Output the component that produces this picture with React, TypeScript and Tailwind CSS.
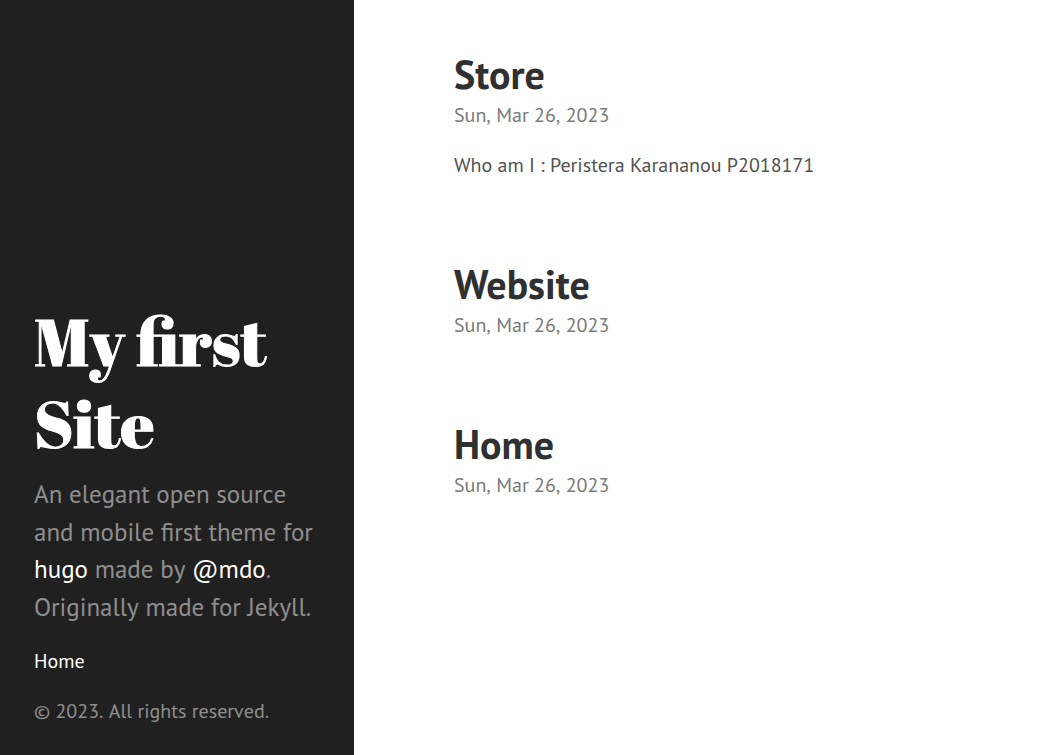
const posts = [
  { title: "Store", date: "Sun, Mar 26, 2023", body: "Who am I : Peristera Karananou P2018171" },
  { title: "Website", date: "Sun, Mar 26, 2023" },
  { title: "Home", date: "Sun, Mar 26, 2023" },
];

export default function App() {
  return (
    <div className="flex min-h-screen bg-white font-['PT_Sans','Open_Sans','Noto_Sans',sans-serif] text-[20px] leading-normal text-[#515151]">
      <aside className="sticky top-0 flex h-screen w-[354px] shrink-0 flex-col justify-end bg-[#202020] px-[34px] pb-[29px] text-white/50 [font-kerning:none]">
        <h1 className="mb-3 font-['Abril_Fatface','Liberation_Serif',serif] text-[66px] leading-[82px] font-normal text-white [-webkit-text-stroke:1px_white]">
          <a href="#">My first Site</a>
        </h1>
        <p className="mb-5 text-[25px]">
          An elegant open source and mobile first theme for{" "}
          <a className="text-white" href="#hugo">hugo</a> made by <a className="text-white" href="#mdo">@mdo</a>. Originally made for Jekyll.
        </p>
        <nav className="mb-5">
          <a className="text-white" href="#home">Home</a>
        </nav>
        <p>© 2023. All rights reserved.</p>
      </aside>
      <main className="min-w-0 flex-1 pt-[49px] pr-10 pl-[100px]">
        {posts.map((post) => (
          <article key={post.title} className="mb-[79px]">
            <h2 className="mb-px text-[40px] leading-tight font-bold text-[#303030]">
              <a href="#post">{post.title}</a>
            </h2>
            <time className="block text-[#7a7a7a] [font-kerning:none]">{post.date}</time>
            {post.body && <p className="mt-5">{post.body}</p>}
          </article>
        ))}
      </main>
    </div>
  );
}
